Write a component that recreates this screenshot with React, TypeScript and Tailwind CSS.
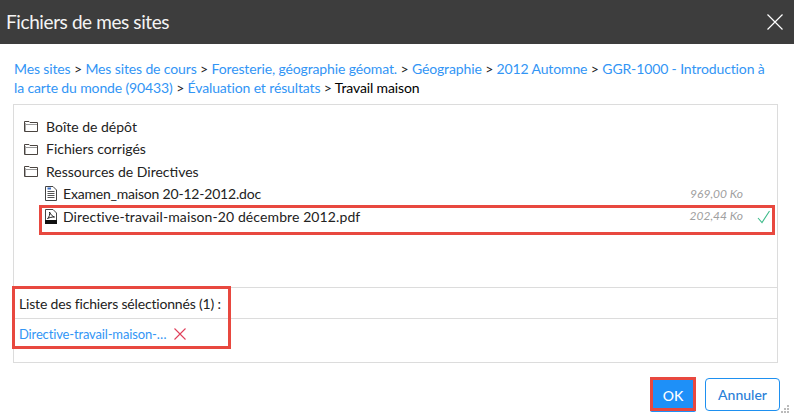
import React from 'react';

const crumbs = ['Mes sites', 'Mes sites de cours', 'Foresterie, géographie géomat.', 'Géographie', '2012 Automne', 'GGR-1000 - Introduction à la carte du monde (90433)', 'Évaluation et résultats'];

const FolderIcon = () => (
    <svg width="14" height="12" viewBox="0 0 14 12" fill="none" stroke="#4a4440" strokeWidth="1" className="shrink-0">
        <path d="M0.5 11.5V1.5H5L6 2.5H13.5V11.5Z" />
        <path d="M1.5 4.5H13" stroke="#999" />
        <path d="M1.5 3V11" stroke="#aaa" />
    </svg>
);

const DocIcon = () => (
    <svg width="12" height="15" viewBox="0 0 12 15" fill="none" stroke="#444" strokeWidth="1" className="shrink-0">
        <path d="M0.5 0.5H8L11.5 4V14.5H0.5Z" />
        <path d="M2.5 5.5H9.5M2.5 7.5H9.5M2.5 9.5H9.5M2.5 11.5H9.5" stroke="#555" />
        <path d="M2.5 2.5H6" stroke="#3a6fc4" strokeWidth="2" />
    </svg>
);

const PdfIcon = () => (
    <svg width="12" height="15" viewBox="0 0 12 15" fill="none" stroke="#444" strokeWidth="1" className="shrink-0">
        <path d="M0.5 0.5H8L11.5 4V14.5H0.5Z" />
        <path d="M2.5 9.5C4.5 8 5 5 4.5 3C6 6 7.5 7.5 9.5 8C7 8 4.5 8.5 2.5 9.5Z" stroke="#222" />
        <rect x="0" y="11" width="12" height="4" fill="#111" stroke="none" />
    </svg>
);

const App: React.FC = () => {
    return (
        <div className="relative w-[794px] h-[417px] overflow-hidden bg-white text-[#222] font-['Lato','Noto_Sans',sans-serif] text-[14px]">
            <div className="h-[44px] bg-[#3d3d3d] flex items-center justify-between pl-[6px] pr-[11px]">
                <span className="text-[19px] tracking-[-0.4px] text-[#f4f4f4]">Fichiers de mes sites</span>
                <svg width="16" height="16" viewBox="0 0 16 16" stroke="#fff" strokeWidth="1.2">
                    <path d="M0.5 0.5L15.5 15.5M15.5 0.5L0.5 15.5" />
                </svg>
            </div>

            <div className="pl-[14px] pt-[15px] leading-[19px] h-[60px] w-[775px] tracking-[-0.13px]">
                {crumbs.map(c => (
                    <span key={c}>
                        <a className="text-[#3295f5]">{c}</a>
                        <span> &gt; </span>
                    </span>
                ))}
                <span className="text-black">Travail maison</span>
            </div>

            <div className="mx-[13px] w-[765px] h-[259px] border border-[#dcdcdc] flex flex-col">
                <div className="h-[182px] pl-[10px] pt-[10px] pr-[34px]">
                    {['Boîte de dépôt', 'Fichiers corrigés', 'Ressources de Directives'].map(name => (
                        <div key={name} className="h-[22.5px] flex items-center gap-[8px]">
                            <FolderIcon />
                            <span>{name}</span>
                        </div>
                    ))}
                    <div className="h-[22.5px] flex items-center gap-[6px] pl-[21px]">
                        <DocIcon />
                        <span className="flex-1 tracking-[-0.2px]">Examen_maison 20-12-2012.doc</span>
                        <span className="italic text-[12px] text-[#a0a0a0]">969,00 Ko</span>
                    </div>
                    <div className="h-[22.5px] flex items-center gap-[6px] pl-[21px]">
                        <PdfIcon />
                        <span className="flex-1 tracking-[0.1px]">Directive-travail-maison-20 décembre 2012.pdf</span>
                        <span className="italic text-[12px] text-[#a0a0a0]">202,44 Ko</span>
                    </div>
                </div>
                <div className="h-[31px] border-t border-[#dcdcdc] flex items-center pl-[5px] tracking-[-0.17px]">Liste des fichiers sélectionnés (1) :</div>
                <div className="h-[44px] border-t border-[#dcdcdc] pl-[5px] pt-[6px] flex items-start gap-[8px]">
                    <span className="text-[#3295f5] text-[13px] tracking-[-0.15px]">Directive-travail-maison-…</span>
                    <svg width="12" height="12" viewBox="0 0 12 12" stroke="#e0405a" strokeWidth="1.1" className="mt-[3px]">
                        <path d="M0.5 0.5L11.5 11.5M11.5 0.5L0.5 11.5" />
                    </svg>
                </div>
            </div>

            <div className="flex justify-end gap-[9px] pr-[14px] pt-[15px]">
                <button className="w-[46px] h-[34px] bg-[#1e90f8] text-white font-medium rounded-[2px]">OK</button>
                <button className="w-[75px] h-[33px] border border-[#1e90f0] text-[#2a7fd8] font-medium rounded-[4px]">Annuler</button>
            </div>

            {/* red annotations */}
            <div className="absolute left-[39px] top-[205px] w-[736px] h-[30px] border-[3px] border-[#e8483f]" />
            <svg className="absolute left-[757px] top-[210px]" width="14" height="14" viewBox="0 0 14 14" fill="none" stroke="#3dbb8a" strokeWidth="1.1">
                <path d="M1 8L5 12.5L12.5 1" />
            </svg>
            <div className="absolute left-[12px] top-[286px] w-[219px] h-[63px] border-[3px] border-[#e8483f]" />
            <div className="absolute left-[650px] top-[377px] w-[46px] h-[34px] border-[3px] border-[#e8483f]" />
            <svg className="absolute left-[781px] top-[405px]" width="9" height="9" viewBox="0 0 9 9" fill="#bbb">
                <rect x="6" y="0" width="2" height="2" />
                <rect x="3" y="3" width="2" height="2" />
                <rect x="6" y="3" width="2" height="2" />
                <rect x="0" y="6" width="2" height="2" />
                <rect x="3" y="6" width="2" height="2" />
                <rect x="6" y="6" width="2" height="2" />
            </svg>
        </div>
    );
};

export default App;
